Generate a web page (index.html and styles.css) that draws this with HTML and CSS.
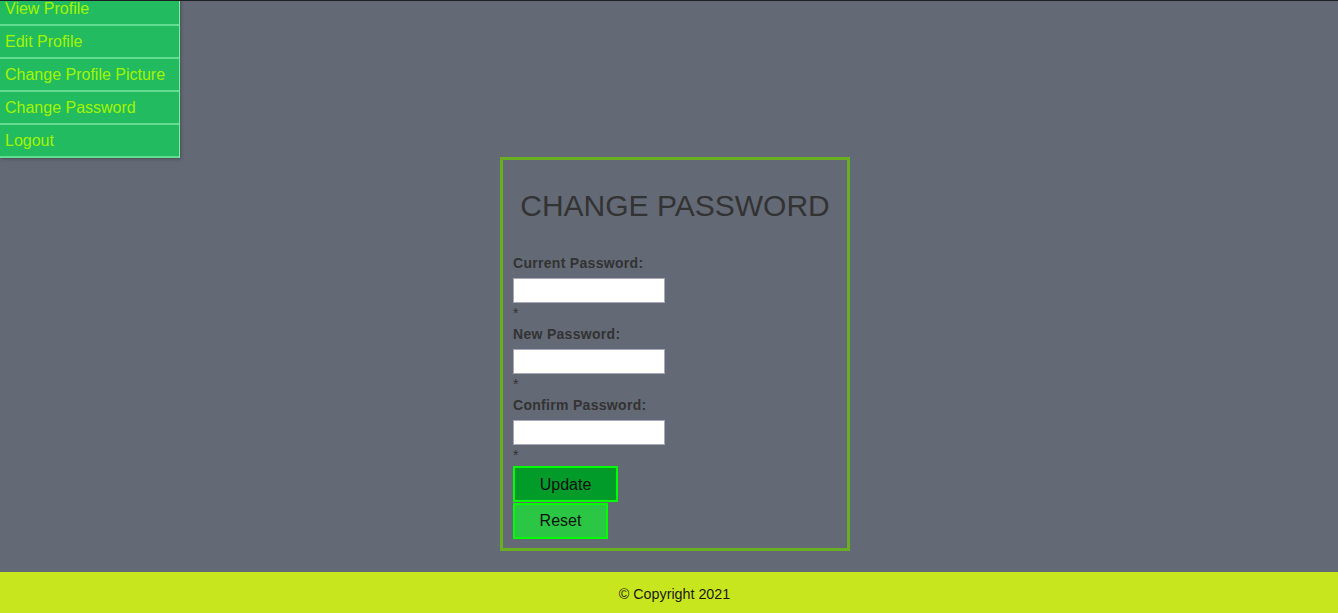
FILE: index.html
```html
<!DOCTYPE html>
<html lang="en">
<head>
<meta charset="utf-8">
<title>Change Password</title>
<link rel="stylesheet" href="styles.css">
</head>
<body>
<div class="topline"></div>
<main class="main">
  <nav class="menu">
    <a class="menu-item" href="#">View Profile</a>
    <a class="menu-item" href="#">Edit Profile</a>
    <a class="menu-item" href="#">Change Profile Picture</a>
    <a class="menu-item" href="#">Change Password</a>
    <a class="menu-item" href="#">Logout</a>
  </nav>
  <form class="card">
    <h2 class="card-title">CHANGE PASSWORD</h2>
    <label class="field-label">Current Password:</label>
    <input class="field-input" type="password">
    <div class="star">*</div>
    <label class="field-label">New Password:</label>
    <input class="field-input" type="password">
    <div class="star">*</div>
    <label class="field-label">Confirm Password:</label>
    <input class="field-input" type="password">
    <div class="star">*</div>
    <button class="btn btn-update" type="button">Update</button>
    <button class="btn btn-reset" type="button">Reset</button>
  </form>
</main>
<footer class="footer">© Copyright 2021</footer>
</body>
</html>
```
FILE: styles.css
```css
html, body {
  margin: 0;
  padding: 0;
  height: 100%;
  overflow: hidden;
}
body {
  background: #636975;
  font-family: "Liberation Sans", Arial, sans-serif;
  display: flex;
  flex-direction: column;
  min-height: 100vh;
}
.topline {
  height: 1px;
  background: #1e1f23;
  flex: none;
  position: relative;
  z-index: 2;
}
.main {
  flex: 1;
  display: flex;
  flex-direction: column;
  align-items: flex-start;
}
.menu {
  margin-top: -8px;
  width: 179px;
  background: #22bb5f;
  border-right: 1px solid #86e6a6;
  box-shadow: 1px 1px 3px rgba(20, 40, 30, 0.35);
  display: flex;
  flex-direction: column;
}
.menu-item {
  display: block;
  height: 29px;
  line-height: 29px;
  padding: 1px 0 1px 5px;
  font-size: 16px;
  color: #a2f500;
  text-decoration: none;
  border-bottom: 2px solid #62dc90;
  white-space: nowrap;
}
.card {
  box-sizing: border-box;
  margin: -1px 0 0 calc(50% - 169px);
  width: 350px;
  border: 3px solid #6aaf22;
  padding: 0 10px 9px 10px;
  display: flex;
  flex-direction: column;
  align-items: flex-start;
}
.card-title {
  align-self: stretch;
  margin: 28px 0 32px 0;
  font-size: 30px;
  line-height: 35px;
  font-weight: normal;
  color: #333333;
  text-align: center;
}
.field-label {
  display: block;
  font-size: 14px;
  line-height: 16px;
  font-weight: bold;
  letter-spacing: 0.3px;
  color: #333333;
  margin-bottom: 7px;
}
.field-input {
  box-sizing: border-box;
  width: 152px;
  height: 25px;
  margin: 0;
  border: 1px solid #a9a7bd;
  background: #ffffff;
  padding: 0 3px;
}
.star {
  font-size: 14px;
  line-height: 16px;
  color: #333333;
  margin: 2px 0 5px 0;
}
.star:last-of-type {
  margin-bottom: 3px;
}
.btn {
  box-sizing: border-box;
  height: 36px;
  padding: 0 24px;
  border: 2px solid #00ff00;
  font-family: "Liberation Sans", Arial, sans-serif;
  font-size: 16px;
  color: #111111;
  margin: 0;
}
.btn-update {
  background: #009b29;
  width: 105px;
  padding-top: 2px;
}
.btn-reset {
  background: #2bc644;
  width: 95px;
  margin-top: 1px;
}
.footer {
  flex: none;
  height: 41px;
  box-sizing: border-box;
  background: #c8e61e;
  padding: 4px 0 0 11px;
  line-height: 37px;
  text-align: center;
  font-size: 14.3px;
  color: #1a1a1a;
}
```
